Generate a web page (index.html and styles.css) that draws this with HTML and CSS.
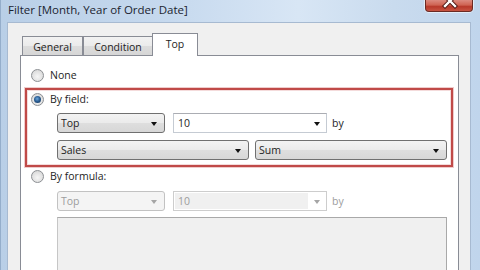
FILE: index.html
```html
<!DOCTYPE html>
<html>
<head>
<meta charset="utf-8">
<link rel="stylesheet" href="styles.css">
</head>
<body>
<div class="window">
  <div class="titlebar">
    <span class="title">Filter [Month, Year of Order Date]</span>
    <div class="close">
      <svg width="48" height="12" viewBox="0 0 48 12">
        <path d="M20 -3 L30 7 M30 -3 L20 7" stroke="#4a1410" stroke-width="4.2" stroke-linecap="square" fill="none"/>
        <path d="M20 -3 L30 7 M30 -3 L20 7" stroke="#ffffff" stroke-width="2.4" stroke-linecap="square" fill="none"/>
      </svg>
    </div>
  </div>
  <div class="client">
    <div class="tabs">
      <div class="tab tab-general">General</div>
      <div class="tab tab-condition">Condition</div>
      <div class="tab tab-top selected">Top</div>
    </div>
    <div class="panel">
      <div class="option"><span class="radio"></span><span>None</span></div>
      <div class="highlight">
        <div class="option inbox"><span class="radio checked"></span><span>By field:</span></div>
        <div class="fields inbox-fields">
          <div class="row row-first">
            <div class="select w-small"><span>Top</span><i class="arrow"></i></div>
            <div class="combo w-mid"><span>10</span><i class="arrow"></i></div>
            <span class="by">by</span>
          </div>
          <div class="row row-second">
            <div class="select w-half"><span>Sales</span><i class="arrow"></i></div>
            <div class="select w-half"><span>Sum</span><i class="arrow"></i></div>
          </div>
        </div>
      </div>
      <div class="option formula"><span class="radio"></span><span>By formula:</span></div>
      <div class="fields outbox-fields">
        <div class="row row-first">
          <div class="select w-small disabled"><span>Top</span><i class="arrow"></i></div>
          <div class="combo w-mid disabled"><span class="inner-field">10</span><i class="arrow"></i></div>
          <span class="by disabled-text">by</span>
        </div>
        <div class="textarea"></div>
      </div>
    </div>
  </div>
</div>
</body>
</html>
```

FILE: styles.css
```css
* { box-sizing: border-box; }
html, body {
  margin: 0;
  padding: 0;
  width: 480px;
  height: 270px;
  overflow: hidden;
}
body {
  font-family: "Open Sans", "Noto Sans", sans-serif;
  font-size: 10.5px;
  color: #1e1e1e;
  background: #c6d9ee;
}
.window {
  width: 480px;
  height: 270px;
  display: flex;
  flex-direction: column;
  background: linear-gradient(90deg, #b9cfe7 0%, #c6d9ee 35%, #d8e6f5 62%, #c9dbee 82%, #c0d5ec 100%);
  border-left: 1px solid #95aecb;
  position: relative;
  overflow: hidden;
}
.titlebar {
  height: 22px;
  flex: none;
  display: flex;
  align-items: center;
  padding-left: 7px;
  padding-bottom: 3px;
}
.title {
  font-size: 11.5px;
  color: #1b2430;
}
.close {
  position: absolute;
  top: 0;
  right: 7px;
  width: 48px;
  height: 12px;
  border: 1px solid #6b2a24;
  border-top: none;
  border-radius: 0 0 4px 4px;
  background: linear-gradient(#dc8a7f 0%, #cf6453 45%, #b8392a 60%, #c75442 100%);
  box-shadow: 0 0 0 1px rgba(255,255,255,0.55);
  overflow: hidden;
}
.close svg {
  display: block;
  margin: -1px 0 0 -1px;
}
.client {
  flex: 1;
  min-height: 0;
  margin: 0 9px 0 6px;
  background: #f0f0f0;
  border: 1px solid #a7bad1;
  border-bottom: none;
  padding: 10px 11px 0 12px;
  display: flex;
  flex-direction: column;
}
.tabs {
  display: flex;
  align-items: flex-end;
  height: 23px;
  margin-left: 2px;
  position: relative;
  z-index: 1;
  flex: none;
}
.tab {
  height: 19px;
  margin-bottom: 1px;
  border: 1px solid #898c95;
  border-bottom: none;
  background: linear-gradient(#f2f2f2 0%, #ebebeb 50%, #dddddd 51%, #d6d6d6 100%);
  display: flex;
  align-items: center;
  justify-content: center;
  padding-top: 1px;
  color: #1e1e1e;
}
.tab-general { width: 61px; }
.tab-condition { width: 70px; }
.tab-top {
  width: 46px;
  margin-left: -1px;
}
.tab.selected {
  height: 23px;
  margin-bottom: 0;
  background: #ffffff;
  padding-top: 0;
  padding-bottom: 2px;
}
.panel {
  flex: 1;
  min-height: 0;
  margin-top: -1px;
  background: #ffffff;
  border: 1px solid #898c95;
  border-bottom: none;
  padding: 11px 5px 0 4px;
  overflow: hidden;
}
.option {
  height: 16px;
  display: flex;
  align-items: center;
  gap: 6px;
  padding-left: 6px;
}
.option.inbox { padding-left: 4px; }
.option.formula { margin-top: 1px; }
.radio {
  width: 13px;
  height: 13px;
  border-radius: 50%;
  border: 1px solid #8c8f93;
  background: radial-gradient(circle at 50% 60%, #f6f6f6 0%, #e2e2e2 55%, #cfcfcf 100%);
  flex: none;
  display: flex;
  align-items: center;
  justify-content: center;
}
.radio.checked::after {
  content: "";
  width: 7px;
  height: 7px;
  border-radius: 50%;
  background: radial-gradient(circle at 45% 40%, #6fa8dc 0%, #2c5f95 45%, #0f2f52 100%);
}
.highlight {
  margin-top: 5px;
  border: 2px solid #c04a48;
  box-shadow: 0 0 0 1px rgba(210, 110, 110, 0.35), inset 0 0 0 1px rgba(210,110,110,0.25);
  padding: 1px 0 5px 0;
}
.fields { display: flex; flex-direction: column; }
.inbox-fields { padding-left: 30px; }
.outbox-fields { padding-left: 32px; }
.row {
  display: flex;
  align-items: center;
  height: 20px;
  flex: none;
}
.inbox-fields .row-first { margin-top: 6px; }
.outbox-fields .row-first { margin-top: 7px; }
.row-second { margin-top: 7px; gap: 6px; }
.row-first .select { margin-right: 8px; }
.select, .combo {
  height: 20px;
  display: flex;
  align-items: center;
  justify-content: space-between;
  padding: 0 7px 0 3px;
  flex: none;
}
.select {
  border: 1px solid #707070;
  border-radius: 3px;
  background: linear-gradient(#f3f3f3 0%, #ebebeb 48%, #dedede 52%, #d7d7d7 100%);
}
.combo {
  border: 1px solid #c5cbd3;
  border-top-color: #abadb3;
  background: #ffffff;
  padding-left: 4px;
  padding-right: 6px;
}
.w-small { width: 108px; }
.w-mid { width: 154px; }
.w-half { width: 192px; }
.arrow {
  width: 0;
  height: 0;
  border-left: 3.5px solid transparent;
  border-right: 3.5px solid transparent;
  border-top: 4px solid #111;
  margin-top: 1px;
}
.by { margin-left: 5px; }
.select.disabled {
  border-color: #c2c2c2;
  background: #f4f4f4;
  color: #9d9d9d;
}
.combo.disabled {
  border-color: #cdcdcd;
  color: #9d9d9d;
  padding-left: 1px;
}
.inner-field {
  flex: none;
  width: 133px;
  height: 16px;
  background: #f0f0f0;
  padding-left: 3px;
  display: flex;
  align-items: center;
}
.disabled .arrow { border-top-color: #a5a5a5; }
.disabled-text { color: #9d9d9d; }
.textarea {
  margin-top: 6px;
  width: 390px;
  height: 53px;
  flex: none;
  background: #f0f0f0;
  border: 1px solid #a9a9a9;
  border-left-color: #c6c6c6;
  border-bottom: none;
}
```
